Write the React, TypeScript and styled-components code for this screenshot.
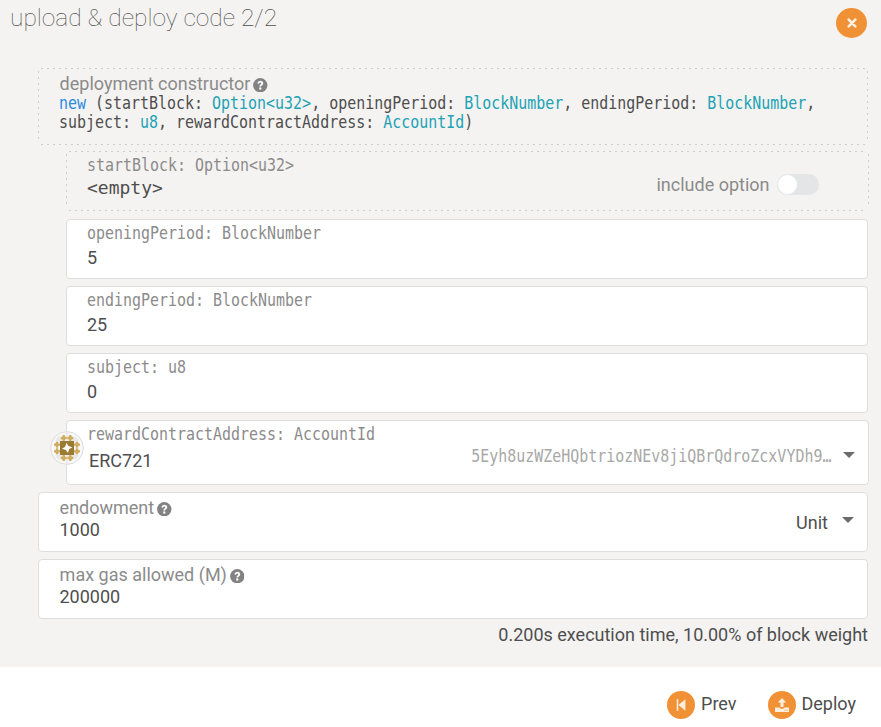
import React from 'react';
import styled, { createGlobalStyle, css } from 'styled-components';

const Global = createGlobalStyle`
  * { box-sizing: border-box; }
  body {
    margin: 0;
    background: #fff;
    color: #4e4e4e;
    font: 18px/22px Roboto, sans-serif;
  }
`;

/* Condensed monospace: every character advances about 9px. */
const mono = css`
  font-family: 'DejaVu Sans Mono', monospace;
  font-size: 17px;
  white-space: nowrap;
  transform: scaleX(0.8797);
  transform-origin: left center;
`;

const dash = '#cfcecc 0 2px, transparent 2px 6px';

const dashedFrame = css`
  border-color: transparent;
  background:
    repeating-linear-gradient(90deg, ${dash}) 3px 0 / calc(100% - 6px) 1px no-repeat border-box,
    repeating-linear-gradient(90deg, ${dash}) 3px 100% / calc(100% - 6px) 1px no-repeat border-box,
    repeating-linear-gradient(180deg, ${dash}) 0 3px / 1px calc(100% - 6px) no-repeat border-box,
    repeating-linear-gradient(180deg, ${dash}) 100% 3px / 1px calc(100% - 6px) no-repeat border-box;
`;

const Modal = styled.div`
  width: 881px;
  height: 727px;
  overflow: hidden;
  display: flex;
  flex-direction: column;
`;

const Content = styled.main`
  height: 667px;
  background: #f4f3f1;
  padding: 0 12px 0 38px;
`;

const Header = styled.header`
  height: 68px;
  margin-left: -28px;
  padding: 3px 2px 0 0;
  display: flex;
  justify-content: space-between;
  align-items: flex-start;
`;

const Title = styled.h1`
  margin: 0;
  font-size: 24.5px;
  line-height: 29px;
  font-weight: 100;
`;

const Round = styled.span<{ $w: number; $h: number; $top?: number }>`
  width: ${(p) => p.$w}px;
  height: ${(p) => p.$h}px;
  margin-top: ${(p) => p.$top ?? 0}px;
  border-radius: 50%;
  background: #f19135;
  display: flex;
  align-items: center;
  justify-content: center;
  flex: none;
`;

const Field = styled.section<{ $h: number; $gap?: number; $nested?: boolean; $dashed?: boolean; $wide?: boolean }>`
  height: ${(p) => p.$h}px;
  margin: 0 ${(p) => (p.$wide ? 0 : 1)}px ${(p) => p.$gap ?? 7}px ${(p) => (p.$nested ? 28 : 0)}px;
  border: 1px solid #dededf;
  border-radius: 4px;
  background: #fff;
  padding: 0 20px;
  display: flex;
  justify-content: space-between;
  position: relative;
  ${(p) => p.$dashed && dashedFrame}
`;

const Column = styled.div<{ $top: number }>`
  padding-top: ${(p) => p.$top}px;
  min-width: 0;
`;

const Label = styled.div`
  color: #8b8b8b;
  height: 22px;
  padding-left: 0.6px;
  display: flex;
  align-items: center;
  gap: 3px;
  white-space: nowrap;
`;

const MonoLabel = styled(Label)`
  padding-left: 0;
  ${mono}
`;

const Value = styled.div<{ $top?: number; $left?: number }>`
  padding: ${(p) => p.$top ?? 0}px 0 0 ${(p) => p.$left ?? 0}px;
  white-space: nowrap;
`;

const Empty = styled(Value)`
  font-family: 'DejaVu Sans Mono', monospace;
`;

const Signature = styled.div`
  ${mono}
  margin-top: -1px;
  line-height: 19px;
`;

const Keyword = styled.span`
  color: #2b8ade;
`;

const Type = styled.span`
  color: #21a2b5;
`;

const Toggle = styled.div`
  display: flex;
  align-items: center;
  gap: 8px;
  height: 22px;
  margin: 22px 29px 0 0;
  color: #8b8b8b;
`;

const Track = styled.span`
  width: 42px;
  height: 21px;
  margin: -1px 0 0 -0.5px;
  border-radius: 11px;
  background: #e3e5e7;
  display: flex;
  align-items: center;
`;

const Knob = styled.span`
  width: 21px;
  height: 21px;
  border-radius: 50%;
  background: #fff;
  border: 1px solid #e6e7e9;
`;

const Picker = styled.div<{ $top: number; $gap: number; $right: number }>`
  height: 22px;
  margin: ${(p) => p.$top}px ${(p) => p.$right}px 0 0;
  display: flex;
  align-items: flex-start;
  gap: ${(p) => p.$gap}px;
`;

const Address = styled.span`
  ${mono}
  transform-origin: right center;
  color: #a8a8a8;
`;

const Caret = styled.span<{ $top: number }>`
  margin-top: ${(p) => p.$top}px;
  border: 6px solid transparent;
  border-top-color: #6c6c6c;
  border-bottom: 0;
`;

const Avatar = styled.div`
  position: absolute;
  left: -17px;
  top: 10px;
  width: 34px;
  height: 34px;
`;

const Note = styled.p`
  margin: 5px 1px 0 0;
  line-height: 18px;
  text-align: right;
`;

const Footer = styled.footer`
  height: 60px;
  padding: 24px 25px 0 0;
  display: flex;
  justify-content: flex-end;
  gap: 31px;
`;

const Action = styled.div`
  height: 28px;
  display: flex;
  gap: 6px;
  line-height: 26px;
`;

const HelpMark = styled.svg`
  margin-top: 2px;
  flex: none;
`;

const Help = () => (
  <HelpMark width="14.5" height="14.5" viewBox="0 0 512 512">
    <circle cx="256" cy="256" r="252" fill="#828282" />
    <path
      d="M155 190c12-62 52-92 104-92 62 0 104 36 104 86 0 68-74 70-74 120h-66c0-76 66-84 66-114 0-18-14-28-32-28-22 0-34 14-46 42z"
      fill="#fafafa"
    />
    <circle cx="256" cy="368" r="43" fill="#fafafa" />
  </HelpMark>
);

const petals = [
  [13.7, 7], [20.3, 7], [13.7, 27], [20.3, 27],
  [7, 13.7], [7, 20.3], [27, 13.7], [27, 20.3],
];

const IdentIcon = () => (
  <svg width="34" height="34" viewBox="0 0 34 34">
    <circle cx="17" cy="17" r="16.4" fill="#f8f8f8" stroke="#dcdcdc" />
    <path d="M17 1v32" stroke="#dedede" />
    <path d="M5 9l4-4 3 3v4H8zM25 5l4 4-3 3h-4V8zM5 25l3-3h4v4l-3 3zM29 25l-4 4-3-3v-4h4z" fill="#e9e9e9" />
    {petals.map(([x, y]) => (
      <path
        key={`${x}-${y}`}
        d={`M${x - 1} ${y - 3}h2l.4 1.6 1.6.4v2l-1.6.4-.4 1.6h-2l-.4-1.6-1.6-.4v-2l1.6-.4z`}
        fill="#cfae62"
      />
    ))}
    <path d="M10 10h14v14H10z" fill="#9b7a32" />
    <path d="M16.4 11.8l2 3.2 3.9 1.2-3.2 2-1.2 3.9-2-3.2-3.9-1.2 3.200-2z" fill="#fff" />
  </svg>
);

const App = () => (
  <>
    <Global />
    <Modal>
      <Content>
        <Header>
          <Title>upload &amp; deploy code 2/2</Title>
          <Round $w={31} $h={30} $top={5}>
            <svg width="10" height="10" viewBox="0 0 10 10">
              <path d="M1.7 1.7l6.6 6.6M8.3 1.7L1.7 8.3" stroke="#fdf1e5" strokeWidth="2.6" strokeLinecap="round" />
            </svg>
          </Round>
        </Header>

        <Field $h={77} $gap={6} $dashed>
          <Column $top={4}>
            <Label>deployment constructor<Help /></Label>
            <Signature>
              <Keyword>new</Keyword> (startBlock: <Type>Option&lt;u32&gt;</Type>, openingPeriod: <Type>BlockNumber</Type>, endingPeriod: <Type>BlockNumber</Type>,
              <br />
              subject: <Type>u8</Type>, rewardContractAddress: <Type>AccountId</Type>)
            </Signature>
          </Column>
        </Field>

        <Field $h={60} $gap={8} $nested $dashed $wide>
          <Column $top={2}>
            <MonoLabel>startBlock: Option&lt;u32&gt;</MonoLabel>
            <Empty $top={1}>&lt;empty&gt;</Empty>
          </Column>
          <Toggle>
            include option
            <Track><Knob /></Track>
          </Toggle>
        </Field>

        <Field $h={60} $nested>
          <Column $top={2}>
            <MonoLabel>openingPeriod: BlockNumber</MonoLabel>
            <Value $top={3}>5</Value>
          </Column>
        </Field>

        <Field $h={60} $nested>
          <Column $top={2}>
            <MonoLabel>endingPeriod: BlockNumber</MonoLabel>
            <Value $top={3}>25</Value>
          </Column>
        </Field>

        <Field $h={60} $nested>
          <Column $top={2}>
            <MonoLabel>subject: u8</MonoLabel>
            <Value $top={3}>0</Value>
          </Column>
        </Field>

        <Field $h={65} $nested $wide>
          <Avatar><IdentIcon /></Avatar>
          <Column $top={2}>
            <MonoLabel>rewardContractAddress: AccountId</MonoLabel>
            <Value $top={5} $left={2}>ERC721</Value>
          </Column>
          <Picker $top={24} $gap={11} $right={-6.5}>
            <Address>5Eyh8uzWZeHQbtriozNEv8jiQBrQdroZcxVYDh9…</Address>
            <Caret $top={7} />
          </Picker>
        </Field>

        <Field $h={60}>
          <Column $top={4}>
            <Label>endowment<Help /></Label>
            <Value $left={0.5}>1000</Value>
          </Column>
          <Picker $top={19} $gap={14} $right={-7}>
            Unit
            <Caret $top={5} />
          </Picker>
        </Field>

        <Field $h={60}>
          <Column $top={4}>
            <Label>max gas allowed (M)<Help /></Label>
            <Value $left={0.5}>200000</Value>
          </Column>
        </Field>

        <Note>0.200s execution time, 10.00% of block weight</Note>
      </Content>

      <Footer>
        <Action>
          <Round $w={28} $h={28}>
            <svg width="12" height="14" viewBox="0 0 12 14">
              <path d="M2.5 1.2v11.6" stroke="#fdeee0" strokeWidth="1.6" />
              <path d="M10.4 1.2v11.6L3.5 7z" fill="#fdeee0" />
            </svg>
          </Round>
          Prev
        </Action>
        <Action>
          <Round $w={28} $h={28}>
            <svg width="14" height="14" viewBox="0 0 14 14">
              <path d="M7 0l4.2 4.5H8.5V9h-3V4.5H2.8z" fill="#fdeee0" />
              <path d="M0 9.5h4.5c.3 1 1.2 1.3 2.5 1.3s2.2-.3 2.5-1.3H14V14H0z" fill="#fdeee0" />
              <path d="M9.5 12.3h1M11.5 12.3h1" stroke="#f19135" strokeWidth="1" />
            </svg>
          </Round>
          Deploy
        </Action>
      </Footer>
    </Modal>
  </>
);

export default App;
